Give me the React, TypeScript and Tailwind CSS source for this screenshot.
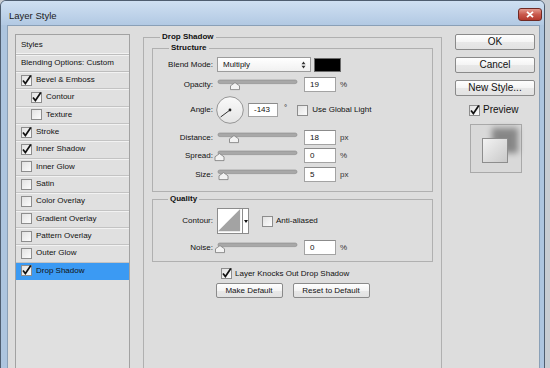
import React from "react";

const styles = [
  { name: "Bevel & Emboss", on: true },
  { name: "Contour", on: true, sub: true },
  { name: "Texture", sub: true },
  { name: "Stroke", on: true },
  { name: "Inner Shadow", on: true },
  { name: "Inner Glow" },
  { name: "Satin" },
  { name: "Color Overlay" },
  { name: "Gradient Overlay" },
  { name: "Pattern Overlay" },
  { name: "Outer Glow" },
  { name: "Drop Shadow", on: true, active: true },
];

function Check({ on }: { on?: boolean }) {
  return (
    <span className="relative block w-[11px] h-[11px] shrink-0 border border-[#8d8d8d] bg-gradient-to-br from-[#e2e2e2] to-[#fcfcfc]">
      {on && (
        <svg width="11" height="11" viewBox="0 0 11 11" className="absolute left-[-1px] top-[-1px] overflow-visible">
          <path d="M2 5.4 L4.4 8.6 L9.8 0.6" fill="none" stroke="#111" strokeWidth="1.7" />
        </svg>
      )}
    </span>
  );
}

function Slider({ pos }: { pos: number }) {
  return (
    <svg width="87" height="15" className="block shrink-0">
      <rect x="5" y="3" width="79" height="3.6" rx="1.8" fill="#a8a8a8" stroke="#878787" strokeWidth="0.6" />
      <path
        d={`M${pos} 5.6 L${pos + 4.5} 8.8 V12.6 H${pos - 4.5} V8.8 Z`}
        fill="#f3f3f3"
        stroke="#7a7a7a"
        strokeWidth="0.8"
      />
    </svg>
  );
}

function Field({ value, w = "w-[32px]", h = "h-[15px]" }: { value: string; w?: string; h?: string }) {
  return (
    <div className={`${w} ${h} shrink-0 flex items-center pl-[5px] bg-white border border-[#a3a3a3] border-t-[#8b8b8b]`}>
      {value}
    </div>
  );
}

function Label({ text }: { text: string }) {
  return <span className="w-[60px] shrink-0 text-right">{text}</span>;
}

function SliderRow({ label, pos, value, unit, className = "" }: { label: string; pos: number; value: string; unit: string; className?: string }) {
  return (
    <div className={`flex items-center h-[15px] ${className}`}>
      <Label text={label} />
      <Slider pos={pos} />
      <div className="ml-[4px]">
        <Field value={value} />
      </div>
      <span className="ml-[4px] text-[#333]">{unit}</span>
    </div>
  );
}

function Button({ children, className = "" }: { children: React.ReactNode; className?: string }) {
  return (
    <div
      className={`flex items-center justify-center rounded-[2px] border border-[#8a8a8a] bg-[linear-gradient(#fefefe_0%,#f4f4f4_50%,#e8e8e8_51%,#e2e2e2_100%)] ${className}`}
    >
      {children}
    </div>
  );
}

export default function App() {
  return (
    <div className="w-[550px] h-[368px] overflow-hidden bg-[#c7ccd2] font-['Liberation_Sans',Arial,sans-serif] text-[8px] leading-[10px] text-[#111]">
      <div className="w-[545px] h-[380px] rounded-t-[6px] border border-[#4f5e70] bg-[#adc5df] flex flex-col">
        {/* title bar */}
        <div className="h-[24px] shrink-0 flex items-start justify-between rounded-t-[5px] bg-gradient-to-b from-[#cfe0f2] to-[#b2c9e3]">
          <span className="mt-[9px] ml-[8px] text-[9.5px] leading-[12px] text-[#1b1b1b]">Layer Style</span>
          <div className="mt-[7px] mr-[2px] w-[24px] h-[13px] rounded-[3px] border border-[#6f2a24] bg-gradient-to-b from-[#e49a8f] via-[#c9584c] to-[#b4392d] flex items-center justify-center">
            <svg width="8" height="7" viewBox="0 0 8 7">
              <path d="M1 0.8 L7 6.2 M7 0.8 L1 6.2" stroke="#fff" strokeWidth="1.8" />
            </svg>
          </div>
        </div>

        {/* content */}
        <div className="flex-1 ml-[6px] mr-[4px] border border-[#8aa0b7] bg-[#dddddd] flex items-start pl-[7px]">
          {/* styles list */}
          <div className="mt-[8px] w-[115px] h-[360px] shrink-0 border border-[#a2a2a2] bg-[#e0e0e0]">
            <div className="h-[20px] flex items-center pl-[5px] border-b border-[#bdbdbd] shadow-[inset_0_-1px_0_#f2f2f2]">Styles</div>
            <div className="h-[17px] flex items-center pl-[5px] border-b border-[#bdbdbd] shadow-[inset_0_1px_0_#f2f2f2]">
              Blending Options: Custom
            </div>
            {styles.map((s) => (
              <div
                key={s.name}
                className={`h-[17.33px] flex items-center gap-[4px] border-b ${
                  s.active ? "bg-[#3b9af3] border-[#3b9af3]" : "border-[#c3c3c3] shadow-[inset_0_1px_0_#f2f2f2]"
                } ${s.sub ? "pl-[15px]" : "pl-[5px]"}`}
              >
                <Check on={s.on} />
                <span>{s.name}</span>
              </div>
            ))}
          </div>

          {/* drop shadow group */}
          <fieldset className="ml-[13px] mt-[6px] w-[299px] h-[360px] shrink-0 border border-[#b0b0b0]">
            <legend className="ml-[16px] px-[2px] font-bold">Drop Shadow</legend>

            <fieldset className="mx-[8px] mt-[1px] pb-[9px] border border-[#b0b0b0]">
              <legend className="ml-[16px] px-[2px] font-bold">Structure</legend>

              <div className="mt-[4px] flex items-center h-[15px]">
                <Label text="Blend Mode:" />
                <div className="ml-[4px] w-[94px] h-[15px] flex items-center justify-between pl-[5px] pr-[4px] border border-[#9c9c9c] bg-gradient-to-b from-[#ffffff] to-[#f1f1f1]">
                  <span>Multiply</span>
                  <svg width="5" height="8" viewBox="0 0 5 8">
                    <path d="M0.5 3.2 L2.5 0.6 L4.5 3.2 Z M0.5 4.8 L2.5 7.4 L4.5 4.8 Z" fill="#333" />
                  </svg>
                </div>
                <div className="ml-[3px] w-[27px] h-[14px] bg-black border border-[#6b6b6b]" />
              </div>

              <SliderRow label="Opacity:" pos={22} value="19" unit="%" className="mt-[5px]" />

              <div className="mt-[4px] flex items-center h-[28px]">
                <Label text="Angle:" />
                <svg width="28" height="28" viewBox="0 0 28 28" className="ml-[3px] shrink-0">
                  <defs>
                    <linearGradient id="dial" x1="0" y1="0" x2="0" y2="1">
                      <stop offset="0" stopColor="#fafafa" />
                      <stop offset="1" stopColor="#e4e4e4" />
                    </linearGradient>
                  </defs>
                  <circle cx="14" cy="14" r="13.3" fill="url(#dial)" stroke="#8c8c8c" strokeWidth="0.9" />
                  <path d="M14 14 L4.6 21" stroke="#333" strokeWidth="1" />
                  <circle cx="14" cy="14" r="1.4" fill="#222" />
                </svg>
                <div className="ml-[4px]">
                  <Field value="-143" w="w-[30px]" h="h-[14px]" />
                </div>
                <span className="ml-[6px] mb-[5px]">°</span>
                <div className="ml-[10px]">
                  <Check />
                </div>
                <span className="ml-[4px]">Use Global Light</span>
              </div>

              <SliderRow label="Distance:" pos={21} value="18" unit="px" className="mt-[6px]" />
              <SliderRow label="Spread:" pos={6.5} value="0" unit="%" className="mt-[3px]" />
              <SliderRow label="Size:" pos={10.5} value="5" unit="px" className="mt-[4px]" />
            </fieldset>

            <fieldset className="mx-[8px] mt-[2px] pb-[6px] border border-[#b0b0b0]">
              <legend className="ml-[15px] px-[2px] font-bold">Quality</legend>

              <div className="mt-[4px] flex items-center h-[26px]">
                <Label text="Contour:" />
                <div className="ml-[4px] flex h-[26px]">
                  <svg width="26" height="26" viewBox="0 0 26 26" className="block border border-[#8c8c8c] bg-white">
                    <path d="M0 24 L24 0 V24 Z" fill="#a3a3a3" />
                  </svg>
                  <div className="w-[6px] h-[26px] border border-l-0 border-[#8c8c8c] bg-white flex items-center justify-center">
                    <svg width="4" height="3" viewBox="0 0 4 3">
                      <path d="M0 0 H4 L2 3 Z" fill="#111" />
                    </svg>
                  </div>
                </div>
                <div className="ml-[13px]">
                  <Check />
                </div>
                <span className="ml-[3px]">Anti-aliased</span>
              </div>

              <SliderRow label="Noise:" pos={7} value="0" unit="%" className="mt-[6px]" />
            </fieldset>

            <div className="mt-[6px] h-[11px] flex items-center gap-[3px] pl-[77px]">
              <Check on />
              <span>Layer Knocks Out Drop Shadow</span>
            </div>

            <div className="mt-[4px] flex justify-center gap-[10px]">
              <Button className="w-[67px] h-[15px]">Make Default</Button>
              <Button className="w-[77px] h-[15px]">Reset to Default</Button>
            </div>
          </fieldset>

          {/* buttons column */}
          <div className="ml-[13px] mt-[8px] w-[80px] shrink-0 flex flex-col text-[10px] leading-[12px]">
            <Button className="h-[16px] border-[#4f7fae]">OK</Button>
            <Button className="mt-[7px] h-[16px]">Cancel</Button>
            <Button className="mt-[7px] h-[16px]">New Style...</Button>
            <div className="mt-[8px] pl-[14px] flex items-center gap-[3px]">
              <Check on />
              <span>Preview</span>
            </div>
            <div className="mt-[8px] ml-[15px] w-[52px] h-[49px] border border-[#a9a9a9] bg-[#d9d9d9] pl-[11px] pt-[13px]">
              <div className="w-[26px] h-[25px] border border-[#8d8d8d] bg-gradient-to-br from-[#f3f3f3] to-[#c9c9c9] shadow-[10px_-10px_6px_rgba(0,0,0,0.38)]" />
            </div>
          </div>
        </div>
      </div>
    </div>
  );
}
